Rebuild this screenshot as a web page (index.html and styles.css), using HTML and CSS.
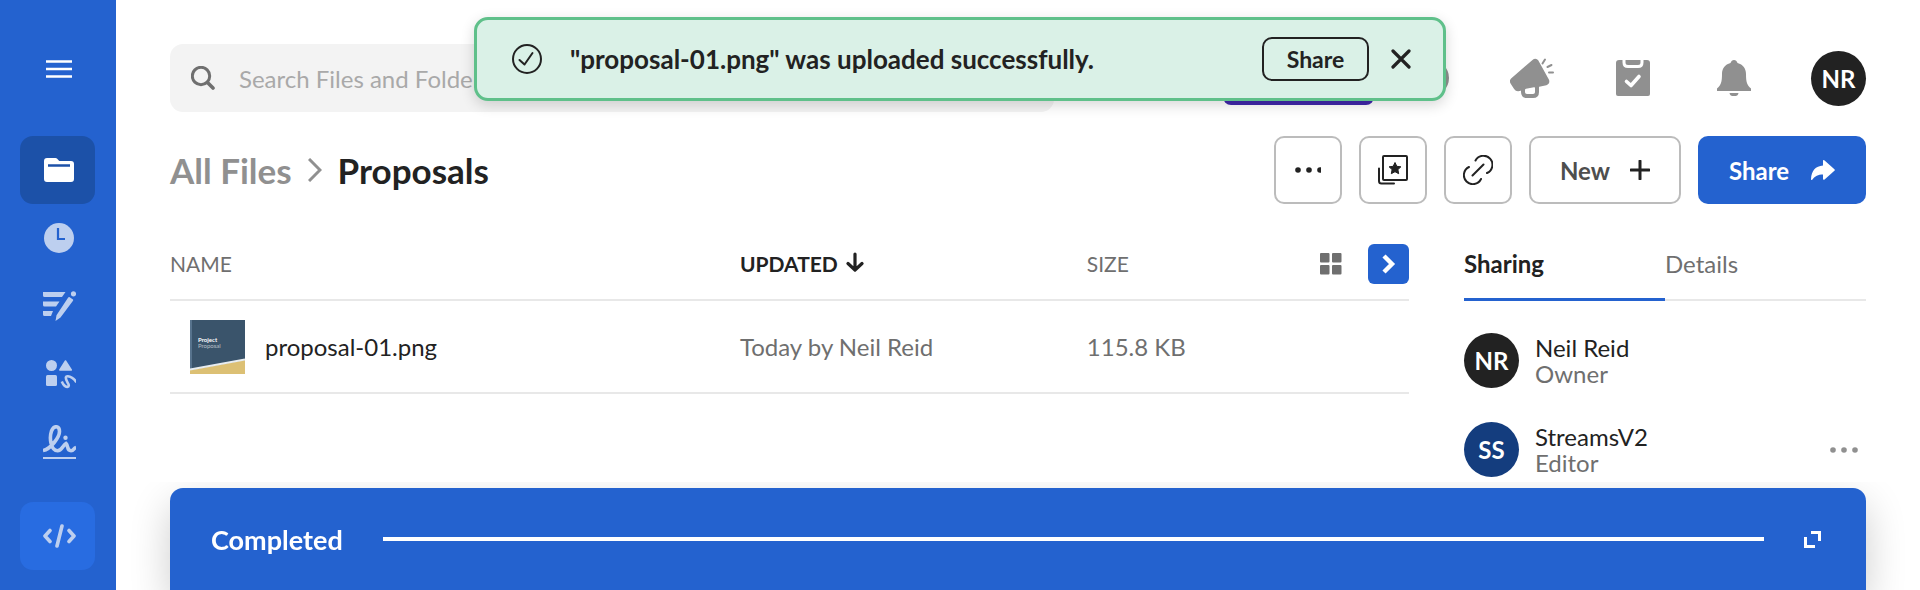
FILE: index.html
```html
<!DOCTYPE html>
<html lang="en">
<head>
<meta charset="utf-8">
<meta name="viewport" content="width=device-width, initial-scale=1">
<title>Proposals</title>
<link rel="stylesheet" href="styles.css">
</head>
<body>
<div class="app">

  <!-- Sidebar -->
  <nav class="sidebar" aria-label="Main">
    <button class="menu-button" aria-label="Menu">
      <svg width="26" height="18" viewBox="0 0 26 18"><path d="M0 1.500h26M0 9h26M0 16.500h26" stroke="#fff" stroke-width="2.600"/></svg>
    </button>
    <a href="#files" class="nav-item active" aria-label="Files">
      <svg width="30" height="24" viewBox="0 0 30 24"><path d="M3 0h8.500q1 0 1.700.7l1.600 1.800q.5.500 1.200.500H27q3 0 3 3v15q0 3-3 3H3q-3 0-3-3V3q0-3 3-3z" fill="#fff"/><path d="M4 7.500h22" stroke="#1c51a8" stroke-width="2.500"/></svg>
    </a>
    <a href="#recents" class="nav-item" aria-label="Recents">
      <svg width="30" height="30" viewBox="0 0 30 30"><circle cx="15" cy="15" r="15" fill="#bdcfef"/><path d="M14 5v11h7" fill="none" stroke="#2462cf" stroke-width="2.200"/></svg>
    </a>
    <a href="#notes" class="nav-item" aria-label="Notes">
      <svg width="33" height="30" viewBox="0 0 33 30" fill="#bdcfef"><path d="M0 1h22.500l-3.500 5H1.500Q0 6 0 4.500zM0 10.500h16.500L13 15.500H1.500Q0 15.500 0 14zM0 20h10l-2 5H1.500Q0 25 0 23.500z"/><path d="M26.300 6l3.700 2.500q.4.500 0 1.200L17.500 26.500l-5 3.500 1-5.800L25.200 6.500q.5-.7 1.100-.5z"/><circle cx="30.500" cy="2.800" r="2.600"/></svg>
    </a>
    <a href="#canvas" class="nav-item" aria-label="Canvas">
      <svg width="33" height="30" viewBox="0 0 33 30" fill="#bdcfef"><circle cx="8.500" cy="6.500" r="5.500"/><path d="M22.500 2l5.800 9H16.800z" stroke="#bdcfef" stroke-width="1.500" stroke-linejoin="round"/><rect x="3" y="16" width="11" height="11" rx="1.500"/><path d="M18.800 22.500q2.200 5 5.400 5.500 3-.5.300-4.500-3.500-6.500.3-6.200 5.200.700 8.600 6" fill="none" stroke="#bdcfef" stroke-width="2.600"/></svg>
    </a>
    <a href="#sign" class="nav-item" aria-label="Sign">
      <svg width="33" height="34" viewBox="0 0 33 34" fill="none" stroke="#bdcfef"><path d="M0 25.500C8 24 16.500 12 16.500 6.500 16.500.5 11 0 8.500 6 6 13.500 8 25.700 14.500 25.700 19 25.700 19.500 20.500 23 18.500 25.500 20.500 23.500 25.700 28 25.700 31 25.700 30.500 23 33 22.500" stroke-width="3.600"/><circle cx="22.500" cy="12.800" r="2.200" fill="#bdcfef" stroke="none"/><path d="M0 33h33" stroke-width="2"/></svg>
    </a>
    <a href="#dev" class="nav-item dev" aria-label="Developer console">
      <svg width="33" height="24" viewBox="0 0 33 24" fill="none" stroke="#bdcfef" stroke-width="3.600" stroke-linecap="round" stroke-linejoin="round"><path d="M7 6.500L2 12l5 5.500M19 2l-5 20M26 6.500l5 5.500-5 5.500"/></svg>
    </a>
  </nav>

  <main class="main">
    <header class="topbar">
      <form class="search">
        <svg width="24" height="24" viewBox="0 0 24 24" fill="none" stroke="#6f6f6f"><circle cx="10" cy="10" r="8.700" stroke-width="3"/><path d="M16.500 16.500l5.500 5.500" stroke-width="3.600" stroke-linecap="round"/></svg>
        <input type="search" placeholder="Search Files and Folders" aria-label="Search Files and Folders">
      </form>
      <div class="top-actions">
        <button class="upgrade" aria-label="Upgrade"></button>
        <button class="top-icon" aria-label="Help">
          <svg width="36" height="36" viewBox="0 0 36 36"><circle cx="18" cy="18" r="18" fill="#909090"/></svg>
        </button>
        <button class="top-icon" aria-label="Announcements">
          <svg width="44" height="40" viewBox="0 0 44 40" fill="#909090"><path d="M24.500 2.500q1.500-.5 2.500 1l10.500 19q.5 2.500-1.500 3L8 31.500q-1.500 0-2.500-1.500l-3.500-5.500q-1-1.500.5-3z" stroke="#909090" stroke-width="3.400" stroke-linejoin="round"/><path d="M13 31v3q0 4 4 4h6q4 0 4-4v-6" fill="none" stroke="#909090" stroke-width="4"/><path d="M15 32q0-1 1-1.200l8-1.500q1 0 1 1V33q0 2-2 2h-6q-2 0-2-2z" fill="#fff"/><path d="M32.500 5.500l2.500-4M37.500 9l4-2M39 14.500h4" fill="none" stroke="#909090" stroke-width="2" stroke-linecap="round"/></svg>
        </button>
        <button class="top-icon" aria-label="Tasks">
          <svg width="34" height="36" viewBox="0 0 34 36"><path d="M3 0h28q3 0 3 3v31q0 2-2 2H2q-2 0-2-2V3q0-3 3-3z" fill="#909090"/><path d="M8 0v2.500q0 4 4 4h10q4 0 4-4V0" fill="none" stroke="#fff" stroke-width="3"/><path d="M10.500 21.500l4.500 4 8-9" fill="none" stroke="#fff" stroke-width="3.600" stroke-linecap="round" stroke-linejoin="round"/></svg>
        </button>
        <button class="top-icon" aria-label="Notifications">
          <svg width="34" height="36" viewBox="0 0 34 36" fill="#909090"><path d="M13.500 3Q14.500 0 17 0t3.500 3C26 4.500 29 8.500 29 14c0 8 1 11 5 14.500V31H0v-2.500C4 25 5 22 5 14 5 8.500 8 4.500 13.500 3zM12.500 33h9q-.5 3-3 3h-3q-2.500 0-3-3z"/></svg>
        </button>
        <button class="avatar" aria-label="Account">NR</button>
      </div>
    </header>

    <div class="title-row">
      <h1 class="breadcrumb">
        <a href="#all">All Files</a>
        <svg width="14" height="24" viewBox="0 0 14 24"><path d="M1 1l11 11L1 23" fill="none" stroke="#909090" stroke-width="3"/></svg>
        <span>Proposals</span>
      </h1>
      <div class="actions">
        <button class="btn square" aria-label="More options">
          <svg width="26" height="6" viewBox="0 0 26 6" fill="#222"><circle cx="3" cy="3" r="2.800"/><circle cx="14" cy="3" r="2.800"/><circle cx="25" cy="3" r="2.800"/></svg>
        </button>
        <button class="btn square" aria-label="Add to collection">
          <svg width="30" height="30" viewBox="0 0 30 30" fill="none" stroke="#222" stroke-width="2"><rect x="5" y="1" width="24" height="24" rx="1"/><path d="M1 13.500V26q0 2.500 2.500 2.500H16" stroke-linecap="round"/><path d="M17 7.500l1.800 3.800 4.100.5-3 2.800.8 4.100-3.700-2-3.700 2 .8-4.100-3-2.800 4.100-.5z" fill="#222" stroke-width="1" stroke-linejoin="round"/></svg>
        </button>
        <button class="btn square" aria-label="Copy link">
          <svg width="30" height="30" viewBox="0 0 30 30" fill="none" stroke="#222" stroke-width="2" stroke-linecap="round"><path d="M12.500 5.500A9 9 0 1 1 24 18M6 12A9 9 0 1 0 18 24M9.500 20.500l11-11"/></svg>
        </button>
        <button class="btn new">New
          <svg width="20" height="20" viewBox="0 0 20 20"><path d="M10 1v18M1 10h18" stroke="#222" stroke-width="3" stroke-linecap="round"/></svg>
        </button>
        <button class="btn primary">Share
          <svg width="24" height="20" viewBox="0 0 24 20" fill="#fff"><path d="M12 1.200q0-2 1.600-.7l9.800 8.700q.9.800 0 1.600l-9.800 8.700q-1.600 1-1.600-.7v-4.300C7 14.500 4 16 1.500 19.500.7 20.500 0 20 0 19 .5 10.500 4.500 6 12 5.500z"/></svg>
        </button>
      </div>
    </div>

    <div class="content">
      <table class="files">
        <thead>
          <tr>
            <th class="col-name">NAME</th>
            <th class="col-updated">UPDATED
              <svg width="18" height="20" viewBox="0 0 18 20"><path d="M9 2v15.500M2 11.500l7 6.500 7-6.500" fill="none" stroke="#222" stroke-width="3.200" stroke-linecap="round" stroke-linejoin="round"/></svg>
            </th>
            <th class="col-size">SIZE</th>
            <th>
              <div class="view-buttons">
                <button class="grid-button" aria-label="Grid view">
                  <svg width="22" height="22" viewBox="0 0 22 22" fill="#6f6f6f"><rect width="9.500" height="9.500" rx="1"/><rect x="12" width="9.500" height="9.500" rx="1"/><rect y="12" width="9.500" height="9.500" rx="1"/><rect x="12" y="12" width="9.500" height="9.500" rx="1"/></svg>
                </button>
                <button class="panel-button" aria-label="Hide sidebar">
                  <svg width="14" height="20" viewBox="0 0 14 20"><path d="M2 2l8 8-8 8" fill="none" stroke="#fff" stroke-width="4.400"/></svg>
                </button>
              </div>
            </th>
          </tr>
        </thead>
        <tbody>
          <tr>
            <td>
              <a href="#proposal-01" class="file">
                <svg width="55" height="54" viewBox="0 0 55 54"><path d="M0 0h55v54H0z" fill="#3a546b"/><path d="M0 0h2v54H0z" fill="#57738d"/><path d="M0 50l55-10v14H0z" fill="#dcc074"/><path d="M0 49.500l55-10" stroke="#e8edf0" stroke-width="2"/><text class="thumb-title" x="8" y="22">Project</text><text class="thumb-sub" x="8" y="28">Proposal</text></svg>
                proposal-01.png
              </a>
            </td>
            <td>Today by Neil Reid</td>
            <td>115.8 KB</td>
            <td></td>
          </tr>
        </tbody>
      </table>

      <aside class="panel">
        <div class="tabs">
          <button class="tab selected">Sharing</button>
          <button class="tab">Details</button>
        </div>
        <ul class="people">
          <li>
            <span class="avatar">NR</span>
            <div class="person">Neil Reid<small>Owner</small></div>
          </li>
          <li>
            <span class="avatar blue">SS</span>
            <div class="person">StreamsV2<small>Editor</small></div>
            <button class="more" aria-label="More options for StreamsV2">
              <svg width="28" height="6" viewBox="0 0 28 6" fill="#909090"><circle cx="3" cy="3" r="2.800"/><circle cx="14" cy="3" r="2.800"/><circle cx="25" cy="3" r="2.800"/></svg>
            </button>
          </li>
        </ul>
      </aside>
    </div>
  </main>
</div>

<!-- Upload notification -->
<div class="toast" role="status">
  <svg width="30" height="30" viewBox="0 0 30 30" fill="none" stroke="#222" stroke-width="2"><circle cx="15" cy="15" r="14"/><path d="M7.500 16l5 4.500 8-11.500" stroke-linecap="round" stroke-linejoin="round"/></svg>
  <p>"proposal-01.png" was uploaded successfully.</p>
  <button class="toast-share">Share</button>
  <button class="toast-close" aria-label="Close">
    <svg width="20" height="20" viewBox="0 0 20 20"><path d="M2 2l16 16M18 2L2 18" stroke="#222" stroke-width="3.200" stroke-linecap="round"/></svg>
  </button>
</div>

<!-- Upload manager -->
<div class="uploads">
  <div class="uploads-bar">
    <span>Completed</span>
    <div class="progress"></div>
    <button aria-label="Expand uploads">
      <svg width="17" height="17" viewBox="0 0 17 17" fill="none" stroke="#fff" stroke-width="3"><path d="M7 1.500h8.500V10M1.500 6v9.500H11"/></svg>
    </button>
  </div>
</div>
</body>
</html>
```
FILE: styles.css
```css
* {
  box-sizing: border-box;
}

body {
  margin: 0;
  font-family: Lato, "Liberation Sans", sans-serif;
  font-size: 24px;
  color: #222;
  background: #fff;
}

button {
  font: inherit;
  color: inherit;
  border: none;
  background: none;
  padding: 0;
  cursor: pointer;
}

svg {
  display: block;
  flex: none;
}

a {
  color: inherit;
  text-decoration: none;
}

.app {
  display: flex;
  min-height: 100vh;
}

/* sidebar */
.sidebar {
  width: 116px;
  flex: none;
  display: flex;
  flex-direction: column;
  padding: 35px 21px 20px 20px;
  background: #2462cf;
}

.menu-button,
.nav-item {
  display: flex;
  align-items: center;
  justify-content: center;
  height: 68px;
  padding-left: 3px;
  border-radius: 13px;
}

.menu-button {
  margin-bottom: 33px;
}

.nav-item.active {
  background: #1c51a8;
}

.nav-item.dev {
  margin-top: auto;
  background: #286ce1;
}

/* top bar */
.main {
  flex: 1;
  min-width: 0;
  padding: 44px 54px 0;
}

.topbar,
.title-row {
  display: flex;
  align-items: center;
  justify-content: space-between;
  height: 68px;
}

.search {
  display: flex;
  align-items: center;
  gap: 24px;
  flex: 0 1 884px;
  height: 68px;
  padding: 0 21px;
  background: #f3f3f3;
  border-radius: 13px;
}

.search input {
  flex: 1;
  min-width: 0;
  border: none;
  outline: none;
  background: none;
  font: inherit;
  padding: 0;
}

.search input::placeholder {
  color: #a9a9a9;
}

.top-actions {
  display: flex;
  align-items: center;
}

.upgrade {
  width: 151px;
  height: 54px;
  margin-right: 6px;
  border-radius: 8px;
  background: #4027ab;
}

.top-icon {
  display: flex;
  justify-content: center;
  width: 101px;
}

.avatar {
  display: flex;
  align-items: center;
  justify-content: center;
  flex: none;
  width: 55px;
  height: 55px;
  border-radius: 50%;
  background: #222;
  color: #fff;
  font-weight: bold;
}

.avatar.blue {
  background: #143d7e;
}

.top-actions .avatar {
  margin-left: 27px;
}

/* breadcrumb and buttons */
.title-row {
  margin: 24px 0;
}

.breadcrumb {
  display: flex;
  align-items: center;
  gap: 16px;
  margin: 0;
  font-size: 35px;
}

.breadcrumb a {
  color: #909090;
}

.actions {
  display: flex;
  gap: 17px;
}

.btn {
  display: flex;
  align-items: center;
  justify-content: center;
  height: 68px;
  border: 2px solid #bcbcbc;
  border-radius: 10px;
  font-weight: bold;
}

.square {
  width: 68px;
}

.new {
  width: 152px;
  gap: 20px;
  color: #4e4e4e;
}

.primary {
  width: 168px;
  gap: 22px;
  border: none;
  background: #2462cf;
  color: #fff;
}

/* file list */
.content {
  display: flex;
  align-items: flex-start;
  gap: 55px;
}

.files {
  flex: 1;
  table-layout: fixed;
  border-collapse: separate;
  border-spacing: 0;
  color: #6f6f6f;
}

.files th,
.files td {
  padding: 0;
  text-align: left;
  border-bottom: 2px solid #e8e8e8;
}

.files th {
  height: 73px;
  font-size: 21px;
  font-weight: normal;
}

.files td {
  height: 93px;
}

.col-name {
  width: 46%;
}

.col-updated {
  width: 28%;
}

.col-size {
  width: 18%;
}

.files .col-updated {
  color: #222;
  font-weight: bold;
}

.col-updated svg {
  display: inline-block;
  margin-left: 3px;
}

.view-buttons {
  display: flex;
  align-items: center;
  justify-content: flex-end;
  gap: 26px;
}

.panel-button {
  display: flex;
  align-items: center;
  justify-content: center;
  width: 41px;
  height: 40px;
  border-radius: 6px;
  background: #2462cf;
}

.file {
  display: flex;
  align-items: center;
  gap: 20px;
  padding-left: 20px;
  color: #222;
}

.thumb-title,
.thumb-sub {
  font-size: 6px;
  fill: #fff;
}

.thumb-title {
  font-weight: bold;
}

.thumb-sub {
  opacity: 0.6;
}

/* sharing panel */
.panel {
  flex: 0 0 402px;
}

.tabs {
  display: flex;
  height: 73px;
}

.tab {
  flex: 1;
  text-align: left;
  color: #6f6f6f;
  border-bottom: 2px solid #e8e8e8;
}

.tab.selected {
  color: #222;
  font-weight: bold;
  border-bottom: 3px solid #2462cf;
}

.people {
  display: flex;
  flex-direction: column;
  gap: 34px;
  margin: 32px 0 0;
  padding: 0;
  list-style: none;
}

.people li {
  display: flex;
  align-items: center;
  gap: 16px;
}

.person {
  flex: 1;
  line-height: 26px;
}

.person small {
  display: block;
  font-size: 24px;
  color: #6f6f6f;
}

.more {
  padding-right: 8px;
}

/* notification */
.toast {
  position: absolute;
  top: 17px;
  left: 50%;
  transform: translateX(-50%);
  display: flex;
  align-items: center;
  width: 972px;
  height: 84px;
  padding: 0 32px 0 35px;
  border: 3px solid #5fc08a;
  border-radius: 14px;
  background: #daf1e7;
  box-shadow: 0 4px 14px rgba(0, 0, 0, 0.16);
}

.toast p {
  flex: 1;
  margin: 0 0 0 28px;
  font-size: 26px;
  font-weight: bold;
}

.toast-share {
  width: 107px;
  height: 44px;
  border: 2px solid #222;
  border-radius: 10px;
  font-size: 23px;
  font-weight: bold;
}

.toast-close {
  margin-left: 22px;
}

/* upload manager */
.uploads {
  position: fixed;
  left: 116px;
  right: 0;
  bottom: 0;
  padding: 6px 54px 0;
  overflow: hidden;
}

.uploads-bar {
  display: flex;
  align-items: center;
  height: 102px;
  padding: 0 45px 0 41px;
  border-radius: 13px 13px 0 0;
  background: #2462cf;
  box-shadow: 0 16px 40px rgba(0, 0, 0, 0.2);
  color: #fff;
  font-size: 27px;
  font-weight: bold;
}

.progress {
  flex: 1;
  height: 4px;
  margin: 0 40px;
  background: #fff;
}
```
